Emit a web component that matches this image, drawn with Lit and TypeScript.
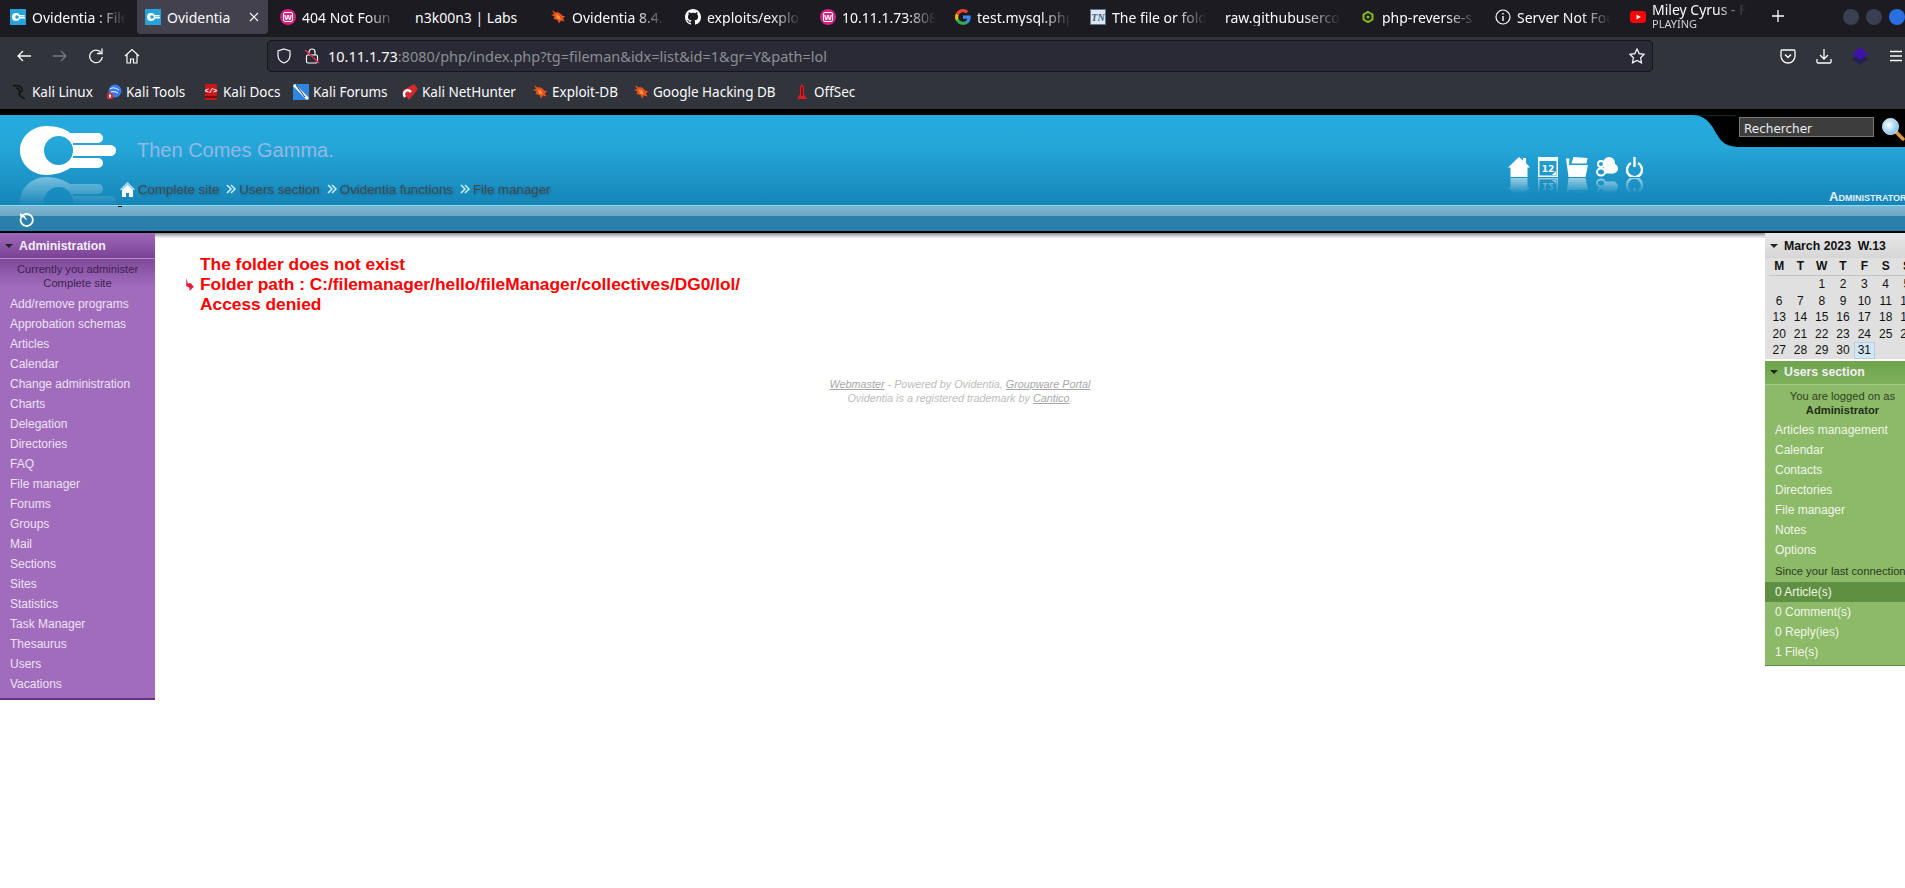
import { LitElement, html, css, svg } from 'lit';
import { customElement } from 'lit/decorators.js';

const ovLogo = svg`<path fill-rule="evenodd" d="M26.500 0C11.900 0 0 11 0 24.500S11.900 49 26.500 49C37 49 46 45 50 42h28a5 5 0 0 0 0-10H53l0-2h37.500a5.500 5.500 0 0 0 0-11H53v-2h25a5 5 0 0 0 0-10H50C46 3 37 0 26.500 0zM38.500 10a14.500 14.500 0 1 1 0 29 14.500 14.500 0 0 1 0-29z"/>`;

const bug = html`<svg viewBox="0 0 16 16" width="16" height="16"><path fill="#e8521c" d="M2 1l3.500 2.500C8 2.500 11 4 12 6.500l3.500 1-2.500 1.500 1.500 3.500-3.500-1-2 3-1.500-3.500L3.500 10l1-2.500L1 6l3-1z"/><path fill="#f79a3c" d="M6 5.500l3.500 1.500 1 3.500L7 9.500z"/></svg>`;
const wp = html`<svg viewBox="0 0 16 16" width="16" height="16"><circle cx="8" cy="8" r="8" fill="#d3237f"/><rect x="3.500" y="3.500" width="9" height="9" rx="1.500" fill="none" stroke="#fff" stroke-width="1"/><text x="8" y="11" font-size="8" font-weight="700" text-anchor="middle" fill="#fff" font-family="Liberation Sans">W</text></svg>`;
const ovFav = html`<svg viewBox="0 0 16 16" width="16" height="16"><rect width="16" height="16" fill="#26a3d8"/><circle cx="6" cy="8" r="4" fill="#fff"/><circle cx="7" cy="8" r="1.800" fill="#26a3d8"/><rect x="9" y="6" width="5.500" height="1.500" fill="#fff"/><rect x="9" y="8" width="6" height="1.500" fill="#fff"/></svg>`;
const github = html`<svg viewBox="0 0 16 16" width="16" height="16"><path fill="#fff" d="M8 0C3.580 0 0 3.580 0 8c0 3.540 2.290 6.530 5.470 7.590.4.070.55-.17.55-.38 0-.19-.01-.82-.01-1.490-2.010.37-2.530-.49-2.690-.94-.09-.23-.48-.94-.82-1.130-.28-.15-.68-.52-.01-.53.63-.01 1.080.58 1.230.82.72 1.210 1.870.87 2.330.66.07-.52.28-.87.51-1.070-1.780-.2-3.640-.89-3.640-3.950 0-.87.31-1.590.82-2.150-.08-.2-.36-1.020.08-2.120 0 0 .67-.21 2.200.82.64-.18 1.320-.27 2-.27.68 0 1.360.09 2 .27 1.530-1.040 2.200-.82 2.200-.82.44 1.100.16 1.920.08 2.120.51.56.82 1.270.82 2.150 0 3.070-1.870 3.750-3.650 3.950.29.25.54.73.54 1.480 0 1.070-.01 1.930-.01 2.200 0 .21.15.46.55.38A8.013 8.013 0 0016 8c0-4.420-3.580-8-8-8z"/></svg>`;
const google = html`<svg viewBox="0 0 18 18" width="16" height="16"><path fill="#4285F4" d="M17.640 9.200c0-.637-.057-1.251-.164-1.840H9v3.481h4.844c-.209 1.125-.843 2.078-1.796 2.717v2.258h2.908c1.702-1.567 2.684-3.874 2.684-6.615z"/><path fill="#34A853" d="M9 18c2.430 0 4.467-.806 5.956-2.180l-2.908-2.259c-.806.54-1.837.86-3.048.86-2.344 0-4.328-1.584-5.036-3.711H.957v2.332C2.438 15.983 5.482 18 9 18z"/><path fill="#FBBC05" d="M3.964 10.710c-.18-.54-.282-1.117-.282-1.710s.102-1.170.282-1.710V4.958H.957C.347 6.173 0 7.548 0 9s.348 2.827.957 4.042l3.007-2.332z"/><path fill="#EA4335" d="M9 3.580c1.321 0 2.508.454 3.440 1.345l2.582-2.580C13.463.891 11.426 0 9 0 5.482 0 2.438 2.017.957 4.958L3.964 7.290C4.672 5.163 6.656 3.580 9 3.580z"/></svg>`;
const tn = html`<svg viewBox="0 0 16 16" width="16" height="16"><rect width="16" height="16" fill="#dfe6ee"/><rect x=".5" y=".5" width="15" height="15" fill="none" stroke="#5a7896"/><text x="8" y="12" font-size="10" font-weight="700" font-style="italic" text-anchor="middle" fill="#3d5f85" font-family="Liberation Serif">TN</text></svg>`;
const phpIcon = html`<svg viewBox="0 0 16 16" width="16" height="16"><path d="M8 3l4.500 2.500v5L8 13l-4.500-2.500v-5z" fill="none" stroke="#86c01c" stroke-width="2"/><circle cx="8" cy="8" r="1.500" fill="#86c01c"/></svg>`;
const info = html`<svg viewBox="0 0 16 16" width="16" height="16"><circle cx="8" cy="8" r="7" fill="none" stroke="#fbfbfe" stroke-width="1.200"/><rect x="7.300" y="7" width="1.400" height="5" fill="#fbfbfe"/><rect x="7.300" y="4" width="1.400" height="1.500" fill="#fbfbfe"/></svg>`;
const youtube = html`<svg viewBox="0 0 16 16" width="16" height="16"><rect y="2" width="16" height="12" rx="3" fill="#f00"/><path d="M6.500 5.500L11 8l-4.500 2.500z" fill="#fff"/></svg>`;

const kaliDragon = html`<svg viewBox="0 0 16 16" width="16" height="16"><path d="M1 2c4-1 8 0 9 3 1 3-3 3-3 5s3 3 6 5M4 4c3 0 4 2 3 4" fill="none" stroke="#111" stroke-width="1.500"/></svg>`;
const kaliTools = html`<svg viewBox="0 0 16 16" width="16" height="16"><circle cx="9" cy="7" r="6.500" fill="#367bf0"/><path d="M4 5c3-2 6-1 9 1M5 8c3-1 5 0 7 1" stroke="#fff" fill="none"/><rect x="1" y="9" width="6" height="6" rx="1" fill="#e3242b"/><rect x="3" y="10.500" width="2" height="3" fill="#fff"/></svg>`;
const kaliDocs = html`<svg viewBox="0 0 16 16" width="16" height="16"><rect x="2" y="0" width="12" height="16" rx="1" fill="#c8161d"/><rect x="2" y="12" width="12" height="2" fill="#7a0c10"/><text x="8" y="9" font-size="7" font-weight="700" text-anchor="middle" fill="#fff" font-family="Liberation Mono">&lt;/&gt;</text></svg>`;
const kaliForums = html`<svg viewBox="0 0 16 16" width="16" height="16"><rect width="16" height="16" fill="#2e86de"/><path d="M1 1l14 14" stroke="#fff" stroke-width="3"/><path d="M3 1l9 12" stroke="#14324f"/></svg>`;
const kaliHunter = html`<svg viewBox="0 0 16 16" width="16" height="16"><path d="M0 7L12 0l4 5-9 11z" fill="#d6272e"/><path d="M3 13c-3-5 2-9 6-5" stroke="#fff" stroke-width="2.500" fill="none"/></svg>`;
const offsec = html`<svg viewBox="0 0 16 16" width="16" height="16"><path d="M8 0l2 3v7l3 5H3l3-5V3z" fill="#d81f26"/><path d="M7.500 3h1v9h-1z" fill="#2a0507"/></svg>`;

const tabs = [
  { icon: ovFav, title: 'Ovidentia : File' },
  { icon: ovFav, title: 'Ovidentia', active: true },
  { icon: wp, title: '404 Not Foun' },
  { icon: null, title: 'n3k00n3 | Labs', solid: true },
  { icon: bug, title: 'Ovidentia 8.4.' },
  { icon: github, title: 'exploits/explo' },
  { icon: wp, title: '10.11.1.73:808' },
  { icon: google, title: 'test.mysql.php' },
  { icon: tn, title: 'The file or fold' },
  { icon: null, title: 'raw.githubuserco' },
  { icon: phpIcon, title: 'php-reverse-s' },
  { icon: info, title: 'Server Not Fou' },
  { icon: youtube, title: 'Miley Cyrus - F', sub: 'PLAYING' },
];

// width runs from one bookmark's icon to the next one's
const bookmarks = [
  { icon: kaliDragon, label: 'Kali Linux', w: 94 },
  { icon: kaliTools, label: 'Kali Tools', w: 97 },
  { icon: kaliDocs, label: 'Kali Docs', w: 90 },
  { icon: kaliForums, label: 'Kali Forums', w: 109 },
  { icon: kaliHunter, label: 'Kali NetHunter', w: 130 },
  { icon: bug, label: 'Exploit-DB', w: 101 },
  { icon: bug, label: 'Google Hacking DB', w: 161 },
  { icon: offsec, label: 'OffSec', w: 80 },
];

const adminItems = ['Add/remove programs', 'Approbation schemas', 'Articles', 'Calendar', 'Change administration', 'Charts', 'Delegation', 'Directories', 'FAQ', 'File manager', 'Forums', 'Groups', 'Mail', 'Sections', 'Sites', 'Statistics', 'Task Manager', 'Thesaurus', 'Users', 'Vacations'];
const userItems = ['Articles management', 'Calendar', 'Contacts', 'Directories', 'File manager', 'Notes', 'Options'];
const sinceItems = ['0 Article(s)', '0 Comment(s)', '0 Reply(ies)', '1 File(s)'];
const dayNames = ['M', 'T', 'W', 'T', 'F', 'S', 'S'];
const days = ['', '', '1', '2', '3', '4', '5', '6', '7', '8', '9', '10', '11', '12', '13', '14', '15', '16', '17', '18', '19', '20', '21', '22', '23', '24', '25', '26', '27', '28', '29', '30', '31', '', ''];

const headerIcons = [
  { w: 22, body: svg`<path fill="#fff" d="M11 0l4 3.500V1h3v5l4 4.500h-2.500V20h-17V10.500H0z"/>` },
  { w: 20, body: svg`<path fill="#fff" fill-rule="evenodd" d="M0 0h20v20H0zM1.500 4v14.500h17V4z"/><text x="10" y="15" font-size="9" font-weight="700" text-anchor="middle" fill="#fff" font-family="DejaVu Sans">12</text><path fill="#fff" d="M14 18l4-4v4z"/>` },
  { w: 22, body: svg`<path fill="#fff" d="M5.500 6.500L7.500 0 21.500 1l-1 5.500zM0 1.500h3.500L3 8h19l-2.500 12H2.500z"/>` },
  { w: 22, body: svg`<circle cx="13" cy="6" r="6" fill="#fff"/><circle cx="17" cy="11.500" r="5" fill="#fff"/><rect x="8" y="8" width="9" height="8.500" fill="#fff"/><circle cx="5" cy="7" r="3" fill="#1fa0d4" stroke="#fff" stroke-width="2"/><ellipse cx="5" cy="15" rx="4" ry="3.500" fill="#1c9ad0" stroke="#fff" stroke-width="2"/>` },
  { w: 17, body: svg`<path d="M5 6a7.500 7.500 0 1 0 7 0" fill="none" stroke="#fff" stroke-width="2.500"/><rect x="7.300" y="0" width="2.400" height="10" fill="#fff"/>` },
];

const triangle = html`<svg class="tri" viewBox="0 0 8 4" width="8" height="4"><path d="M0 0h8L4 4z"/></svg>`;
const chevrons = html`<svg class="chev" viewBox="0 0 10 10" width="10" height="10"><path d="M1 1l4 4-4 4M5 1l4 4-4 4" fill="none" stroke="#cfeeff" stroke-width="1.500"/></svg>`;

@customElement('app-root')
export class AppRoot extends LitElement {
  static styles = css`
    :host {
      display: flex;
      flex-direction: column;
      width: 1905px;
      height: 888px;
      overflow: hidden;
      background: #fff;
      font-family: 'Liberation Sans', Arial, sans-serif;
      font-size: 12px;
    }

    .tabbar {
      display: flex;
      flex: none;
      height: 37px;
      padding-left: 2px;
      background: #1c1b22;
      color: #fbfbfe;
      font-family: 'Noto Sans', sans-serif;
      font-size: 14px;
    }
    .tab {
      display: flex;
      flex: none;
      align-items: center;
      gap: 6px;
      box-sizing: border-box;
      width: 131px;
      height: 34px;
      margin-right: 4px;
      padding: 0 7px 0 8px;
      border-radius: 0 0 4px 4px;
      white-space: nowrap;
    }
    .tab svg { flex: none; }
    .tab.active { background: #42414d; padding-right: 0; }
    .tab-title {
      flex: 1;
      min-width: 0;
      -webkit-mask-image: linear-gradient(to right, #000 68%, transparent 100%);
      mask-image: linear-gradient(to right, #000 68%, transparent 100%);
    }
    .tab.active .tab-title,
    .tab.solid .tab-title { -webkit-mask-image: none; mask-image: none; }
    .tab-sub { font-size: 11px; line-height: 12px; color: #d0d0d6; }
    .tab-main { line-height: 17px; }
    .has-sub { margin-top: -3px; }
    .tab-close { margin-right: 9px; }
    .newtab { flex: none; margin-left: 15px; margin-top: 10px; }
    .winbtns { display: flex; gap: 7px; margin-left: 59px; margin-top: 9px; }
    .winbtn { flex: none; width: 16px; height: 16px; border-radius: 50%; background: #3b3f52; }
    .winbtn.close { background: #2a6fe0; }

    .toolbar {
      display: flex;
      flex: none;
      align-items: center;
      height: 38px;
      padding-left: 6px;
      background: #32343c;
    }
    .tool { display: flex; flex: none; align-items: center; justify-content: center; width: 36px; }
    .urlbar {
      display: flex;
      flex: none;
      align-items: center;
      box-sizing: border-box;
      width: 1386px;
      height: 32px;
      margin: 0 117px;
      padding: 0 7px 0 8px;
      border: 1px solid #15151b;
      border-radius: 4px;
      background: #292a35;
      font-family: 'Noto Sans', sans-serif;
      font-size: 14.500px;
      color: #8d8e96;
    }
    .urlbar strong { font-weight: 400; color: #fbfbfe; }
    .url { flex: 1; margin-left: 8px; white-space: nowrap; }
    .lock { margin-left: 12px; }

    .bookmarks {
      display: flex;
      flex: none;
      align-items: center;
      height: 34px;
      padding-left: 12px;
      background: #32343c;
      color: #fbfbfe;
      font-family: 'Noto Sans', sans-serif;
      font-size: 13.500px;
    }
    .bookmark { display: flex; flex: none; align-items: center; gap: 4px; white-space: nowrap; }

    .gap-black { flex: none; height: 6px; background: #000; }
    .header {
      display: flex;
      flex: none;
      height: 90px;
      background: linear-gradient(#26abde 0, #25a6d9 35%, #1685b8 100%);
    }
    .logo { flex: none; width: 96px; height: 79px; margin: 11px 4px 0 20px; }
    .title-col { flex: 1; }
    .site-title { height: 23px; margin: 24px 0 0 17px; font-size: 20px; line-height: 23px; color: #93b8e4; }
    .crumbs {
      display: flex;
      align-items: center;
      height: 16px;
      margin-top: 19px;
      font-size: 13.300px;
      color: #3e4a52;
      text-shadow: 1px 1px 3px rgba(0, 0, 0, 0.25);
    }
    .crumbs svg { flex: none; }
    .home { margin-right: 3px; }
    .chev { margin: 0 3px 0 7px; }
    .mark { position: absolute; left: 118px; top: 206px; width: 4px; height: 1px; background: #000; }

    .h-icons { display: flex; flex: none; gap: 8px; margin: 42px 50px 0 0; }
    .h-icon { display: flex; flex-direction: column; gap: 1px; }
    .reflect {
      display: block;
      transform: scaleY(-1);
      -webkit-mask-image: linear-gradient(to top, rgba(0, 0, 0, 0.55), transparent 85%);
      mask-image: linear-gradient(to top, rgba(0, 0, 0, 0.55), transparent 85%);
    }
    .h-right { flex: none; width: 212px; overflow: hidden; }
    .search-row { display: flex; height: 32px; }
    .search-box { display: flex; flex: 1; gap: 7px; padding: 2px 0 0 3px; background: #000; }
    .search-input {
      box-sizing: border-box;
      flex: none;
      width: 135px;
      height: 20px;
      padding: 0 4px;
      overflow: hidden;
      border: 1px solid #777;
      background: #3d3d3d;
      color: #eee;
      font-family: 'DejaVu Sans', sans-serif;
      font-size: 12px;
      line-height: 23px;
    }
    .admin {
      margin: 43px 0 0 136px;
      color: #e4f1f8;
      font-size: 13px;
      line-height: 14px;
      font-weight: 700;
      font-variant: small-caps;
      white-space: nowrap;
    }

    .strip {
      display: flex;
      flex: none;
      box-sizing: border-box;
      height: 26px;
      padding: 6px 0 0 19px;
      border-top: 1px solid #8fd8f4;
      background: linear-gradient(#7cb7d1 0, #6ca8c4 10px, #2a80aa 10px);
    }
    .gap-line { flex: none; height: 2px; background: #000; }

    .row { display: flex; flex: 1; align-items: flex-start; min-height: 0; }
    .side { flex: none; width: 155px; box-sizing: border-box; }
    .side.left { background: #a26cbd; border-bottom: 2px solid #6a2f86; }
    .right { width: 140px; overflow: hidden; }
    .right-inner { width: 155px; }

    .side-title {
      display: flex;
      align-items: center;
      gap: 6px;
      height: 25px;
      padding-left: 5px;
      color: #f5eefa;
      font-size: 12.300px;
      font-weight: 700;
    }
    .tri { flex: none; fill: #222; }
    .left .side-title {
      background: linear-gradient(#9f68ba, #7a4295);
      border-bottom: 1px solid #b58bcb;
      height: 25px;
    }
    .note {
      padding: 3px 0 4px;
      font-size: 11.200px;
      line-height: 14px;
      text-align: center;
      white-space: nowrap;
    }
    .left .note { color: #3c2252; background: linear-gradient(#804a9a, #a26cbd 28px); }
    .side-item { height: 20px; padding-left: 10px; line-height: 20px; white-space: nowrap; }
    .left .side-item { color: #ece2f4; }
    .left .items { padding-bottom: 4px; }

    .main { flex: 1; min-width: 0; background: linear-gradient(#8a8a8a 0, #e8e8e8 4px, #fff 6px) no-repeat top / 100% 6px; }
    .msg { display: flex; align-items: center; gap: 6px; padding: 21px 0 0 30px; color: #f00; font-size: 17.330px; font-weight: 700; line-height: 20px; }
    .foot { margin-top: 63px; color: #bcbcbc; font-size: 10.800px; font-style: italic; line-height: 14px; text-align: center; }
    .foot a { color: #a8a8a8; text-decoration: underline; }

    .cal { background: #e0e0e0; color: #111; }
    .cal .side-title {
      height: 25px;
      color: #111;
      background: linear-gradient(#e8e8e8, #d6d6d6);
      white-space: pre;
    }
    .cal-grid { display: grid; grid-template-columns: repeat(7, 21.300px); padding-left: 3.500px; }
    .cal-head { height: 17px; line-height: 17px; font-weight: 700; text-align: center; border-bottom: 1px solid #c4c4c4; }
    .cal-day { height: 16.500px; line-height: 16.500px; text-align: center; }
    .cal-day.today { box-sizing: border-box; line-height: 15px; background: #d2e6f8; border: 1px solid #b6cfe0; }

    .users { margin-top: 2px; background: #8cba68; border-bottom: 1px solid #5f8f40; }
    .users .side-title {
      height: 23px;
      background: linear-gradient(#6da44c, #7fb05c);
      border-bottom: 1px solid #a3cc84;
    }
    .users .note { padding: 4px 0 3px; color: #2f4220; }
    .users .note b { color: #222f18; }
    .users .side-item { color: #f0f6e8; }
    .since { padding: 4px 0 4px 10px; font-size: 11.200px; line-height: 14px; color: #2a3a1c; white-space: nowrap; }
    .since-row.on { background: #5f8f40; }
    .since-list { padding-bottom: 3px; }
  `;

  private renderTab(t: (typeof tabs)[number]) {
    return html`<div class="tab ${t.active ? 'active' : ''} ${t.solid ? 'solid' : ''}">
      ${t.icon}
      <div class="tab-title ${t.sub ? 'has-sub' : ''}">
        <div class="tab-main">${t.title}</div>
        ${t.sub ? html`<div class="tab-sub">${t.sub}</div>` : null}
      </div>
      ${t.active
        ? html`<svg class="tab-close" viewBox="0 0 10 10" width="10" height="10"><path d="M1 1l8 8M9 1l-8 8" stroke="#fbfbfe" stroke-width="1.200"/></svg>`
        : null}
    </div>`;
  }

  private renderHeaderIcon(i: (typeof headerIcons)[number]) {
    return html`<div class="h-icon" style="width:${i.w}px">
      <svg viewBox="0 0 ${i.w} 20" width=${i.w} height="20">${i.body}</svg>
      <svg class="reflect" viewBox="0 0 ${i.w} 20" width=${i.w} height="18" preserveAspectRatio="xMidYMax slice">${i.body}</svg>
    </div>`;
  }

  render() {
    return html`
      <div class="tabbar">
        ${tabs.map((t) => this.renderTab(t))}
        <svg class="newtab" viewBox="0 0 12 12" width="12" height="12"><path d="M6 0v12M0 6h12" stroke="#fbfbfe" stroke-width="1.300"/></svg>
        <div class="winbtns">
          <div class="winbtn"></div>
          <div class="winbtn"></div>
          <div class="winbtn close"></div>
        </div>
      </div>

      <div class="toolbar">
        <div class="tool"><svg viewBox="0 0 16 16" width="16" height="16"><path d="M15 8H2M7 3L2 8l5 5" fill="none" stroke="#fbfbfe" stroke-width="1.300"/></svg></div>
        <div class="tool"><svg viewBox="0 0 16 16" width="16" height="16"><path d="M1 8h13M9 3l5 5-5 5" fill="none" stroke="#77777f" stroke-width="1.300"/></svg></div>
        <div class="tool"><svg viewBox="0 0 16 16" width="16" height="16"><path d="M13 4.500A6.300 6.300 0 1 0 14.300 9" fill="none" stroke="#fbfbfe" stroke-width="1.300"/><path d="M14 0.500v5h-5" fill="none" stroke="#fbfbfe" stroke-width="1.300"/></svg></div>
        <div class="tool"><svg viewBox="0 0 16 16" width="16" height="16"><path d="M1 8l7-6.500L15 8M3 6.500V15h3.500v-4h3v4H13V6.500" fill="none" stroke="#fbfbfe" stroke-width="1.200"/></svg></div>
        <div class="urlbar">
          <svg viewBox="0 0 16 16" width="16" height="16"><path d="M8 1l6 2v4c0 4-3 7-6 8-3-1-6-4-6-8V3z" fill="none" stroke="#fbfbfe" stroke-width="1.200"/></svg>
          <svg class="lock" viewBox="0 0 16 16" width="16" height="16"><rect x="2.500" y="7" width="11" height="8" rx="1.500" fill="none" stroke="#fbfbfe" stroke-width="1.200"/><path d="M5 7V4a3 3 0 0 1 6 0v3" fill="none" stroke="#fbfbfe" stroke-width="1.200"/><path d="M1 2l14 13" stroke="#e22850" stroke-width="1.600"/></svg>
          <span class="url"><strong>10.11.1.73</strong>:8080/php/index.php?tg=fileman&amp;idx=list&amp;id=1&amp;gr=Y&amp;path=lol</span>
          <svg viewBox="0 0 16 16" width="16" height="16"><path d="M8 1l2.200 4.600 5 .7-3.600 3.500.9 5L8 12.400 3.500 14.800l.9-5L.8 6.300l5-.7z" fill="none" stroke="#fbfbfe" stroke-width="1.200"/></svg>
        </div>
        <div class="tool"><svg viewBox="0 0 16 16" width="16" height="16"><path d="M2 2h12a1 1 0 0 1 1 1v5a7 7 0 0 1-14 0V3a1 1 0 0 1 1-1z" fill="none" stroke="#fbfbfe" stroke-width="1.300"/><path d="M5 6.500l3 3 3-3" fill="none" stroke="#fbfbfe" stroke-width="1.500"/></svg></div>
        <div class="tool"><svg viewBox="0 0 16 16" width="16" height="16"><path d="M8 1v10M4 7l4 4 4-4M1 11v3a1 1 0 0 0 1 1h12a1 1 0 0 0 1-1v-3" fill="none" stroke="#fbfbfe" stroke-width="1.300"/></svg></div>
        <div class="tool"><svg viewBox="0 0 16 18" width="16" height="18"><path d="M8 6l8 6-8 6-8-6z" fill="#241f55"/><path d="M8 0l8 7-8 6-8-6z" fill="#3d12a8"/></svg></div>
        <div class="tool"><svg viewBox="0 0 14 12" width="14" height="12"><path d="M1 1.500h12M1 6h12M1 10.500h12" stroke="#fbfbfe" stroke-width="1.300"/></svg></div>
      </div>

      <div class="bookmarks">
        ${bookmarks.map((b) => html`<div class="bookmark" style="width:${b.w}px">${b.icon}<span>${b.label}</span></div>`)}
      </div>
      <div class="gap-black"></div>

      <div class="header">
        <svg class="logo" viewBox="0 0 96 79">
          <defs>
            <linearGradient id="fade" x1="0" y1="1" x2="0" y2="0">
              <stop offset="0" stop-color="#fff" stop-opacity=".4"></stop>
              <stop offset=".58" stop-color="#fff" stop-opacity="0"></stop>
            </linearGradient>
          </defs>
          <g fill="#fff">${ovLogo}</g>
          <g fill="url(#fade)" transform="translate(0 100) scale(1 -1)">${ovLogo}</g>
        </svg>
        <div class="title-col">
          <div class="site-title">Then Comes Gamma.</div>
          <div class="crumbs">
            <svg class="home" viewBox="0 0 15 15" width="15" height="15"><path d="M7.500 0L15 7.500h-2V15H9v-4H6v4H2V7.500H0z" fill="#fff"/><path d="M7.500 0L15 7.500 13 8 7.500 3 2 8 0 7.500z" fill="#8fd0f2"/></svg>
            <span>Complete site</span>${chevrons}<span>Users section</span>${chevrons}<span>Ovidentia functions</span>${chevrons}<span>File manager</span>
          </div>
        </div>
        <div class="h-icons">${headerIcons.map((i) => this.renderHeaderIcon(i))}</div>
        <div class="h-right">
          <div class="search-row">
            <svg viewBox="0 0 44 32" width="44" height="32"><path d="M0 0H44V32C30 32 26 22 20 12 14 3 8 0 0 0Z" fill="#000"/></svg>
            <div class="search-box">
              <div class="search-input">Rechercher</div>
              <svg viewBox="0 0 24 24" width="24" height="24" style="flex:none">
                <defs><radialGradient id="lens" cx=".4" cy=".4" r=".7"><stop offset="0" stop-color="#fff"></stop><stop offset="1" stop-color="#6ab8ea"></stop></radialGradient></defs>
                <path d="M15 15l7 7" stroke="#d89a3a" stroke-width="3.500" stroke-linecap="round"/>
                <circle cx="9.500" cy="9.500" r="8" fill="url(#lens)" stroke="#cfe6f6"/>
              </svg>
            </div>
          </div>
          <div class="admin">Administrator</div>
        </div>
      </div>
      <div class="mark"></div>
      <div class="strip">
        <svg viewBox="0 0 16 16" width="15" height="15"><path d="M4 3.500a6.500 6.500 0 1 1-2 3" fill="none" stroke="#fff" stroke-width="1.900"/><path d="M1 1l.5 5.500L7 5z" fill="#fff"/><path d="M4 4l4 4" fill="none" stroke="#fff" stroke-width="1.300"/></svg>
      </div>
      <div class="gap-line"></div>

      <div class="row">
        <div class="side left">
          <div class="side-title">${triangle}<span>Administration</span></div>
          <div class="note">Currently you administer<br />Complete site</div>
          <div class="items">${adminItems.map((i) => html`<div class="side-item">${i}</div>`)}</div>
        </div>

        <div class="main">
          <div class="msg">
            <svg viewBox="0 0 8 12" width="9" height="13"><path d="M1 0l1.500 5L5 4.500 8 8l-4 4V9L1 7.500z" fill="#e0203a"/></svg>
            <div>The folder does not exist<br />Folder path : C:/filemanager/hello/fileManager/collectives/DG0/lol/<br />Access denied</div>
          </div>
          <div class="foot">
            <a>Webmaster</a> - Powered by Ovidentia, <a>Groupware Portal</a><br />
            Ovidentia is a registered trademark by <a>Cantico</a>.
          </div>
        </div>

        <div class="side right">
          <div class="right-inner">
            <div class="cal">
              <div class="side-title">${triangle}<span>March 2023  W.13</span></div>
              <div class="cal-grid">
                ${dayNames.map((d) => html`<div class="cal-head">${d}</div>`)}
                ${days.map((d) => html`<div class="cal-day ${d === '31' ? 'today' : ''}">${d}</div>`)}
              </div>
            </div>
            <div class="users">
              <div class="side-title">${triangle}<span>Users section</span></div>
              <div class="note">You are logged on as<br /><b>Administrator</b></div>
              ${userItems.map((i) => html`<div class="side-item">${i}</div>`)}
              <div class="since">Since your last connection</div>
              <div class="since-list">
                ${sinceItems.map((s, n) => html`<div class="side-item since-row ${n === 0 ? 'on' : ''}">${s}</div>`)}
              </div>
            </div>
          </div>
        </div>
      </div>
    `;
  }
}
